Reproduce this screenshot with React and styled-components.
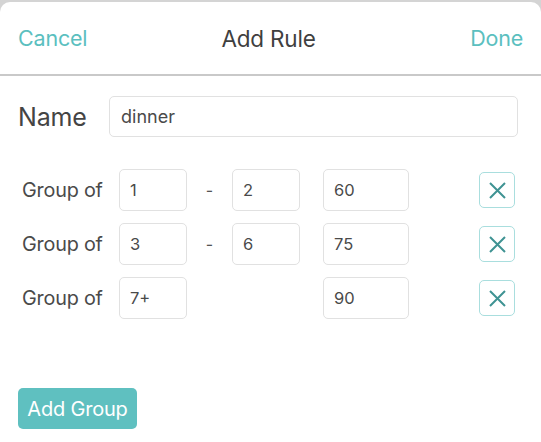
import React from "react";
import styled, { createGlobalStyle } from "styled-components";

const Global = createGlobalStyle`
  html, body { margin: 0; padding: 0; background: #cfcfcf; }
  body { font-family: Inter, "Noto Sans", sans-serif; -webkit-font-smoothing: antialiased; }
  * { box-sizing: border-box; }
`;

const Page = styled.div`
  width: 541px;
  height: 442px;
  padding-top: 2px;
  background: #d4d4d4;
  overflow: hidden;
`;

const Sheet = styled.div`
  height: 440px;
  background: #fff;
  border-radius: 10px 10px 0 0;
  display: flex;
  flex-direction: column;
`;

const Header = styled.div`
  height: 74px;
  display: grid;
  grid-template-columns: 1fr auto 1fr;
  align-items: center;
  padding: 0 18px 0 18px;
  border-bottom: 2px solid #c9c9c9;
`;

const NavButton = styled.span`
  font-size: 21.5px;
  color: #5bbfbf;
  justify-self: ${(p) => (p.$right ? "end" : "start")};
  letter-spacing: -0.2px;
`;

const Title = styled.span`
  font-size: 22.5px;
  color: #3f3f3f;
  letter-spacing: -0.2px;
  padding-right: 4px;
`;

const NameRow = styled.div`
  display: flex;
  align-items: center;
  margin-top: 20px;
  padding: 0 23px 0 18px;
`;

const NameLabel = styled.span`
  width: 91px;
  font-size: 25px;
  color: #444;
  letter-spacing: -0.2px;
`;

const TextBox = styled.div`
  height: ${(p) => p.$h || 42}px;
  width: ${(p) => (p.$w ? `${p.$w}px` : "auto")};
  flex: ${(p) => (p.$w ? "none" : 1)};
  border: 1px solid #e1e1e1;
  border-radius: 5px;
  display: flex;
  align-items: center;
  padding-left: ${(p) => p.$pad || 10}px;
  font-size: ${(p) => p.$fs || 16.5}px;
  color: #4a4a4a;
`;

const Groups = styled.div`
  display: flex;
  flex-direction: column;
  gap: 12px;
  margin-top: 32px;
`;

const Row = styled.div`
  display: flex;
  align-items: center;
  padding-left: 22px;
  height: 42px;
`;

const RowLabel = styled.span`
  width: 97px;
  font-size: 19.8px;
  color: #4a4a4a;
  letter-spacing: -0.2px;
`;

const Dash = styled.span`
  width: 45px;
  text-align: center;
  font-size: 16px;
  color: #555;
`;

const Spacer = styled.div`
  width: ${(p) => p.$w}px;
  flex: none;
`;

const RemoveButton = styled.div`
  width: 36px;
  height: 36px;
  border: 1px solid #a9dede;
  border-radius: 5px;
  display: flex;
  align-items: center;
  justify-content: center;
`;

const AddButton = styled.div`
  margin: 69px 0 0 18px;
  width: 119px;
  height: 41px;
  border-radius: 5px;
  background: #5fc0c0;
  color: #fff;
  font-size: 20px;
  letter-spacing: -0.2px;
  display: flex;
  align-items: center;
  justify-content: center;
`;

const XIcon = () => (
  <svg width="19" height="19" viewBox="0 0 19 19">
    <path d="M2 2 L17 17 M17 2 L2 17" stroke="#3f9393" strokeWidth="2" strokeLinecap="butt" />
  </svg>
);

const groups = [
  { from: "1", to: "2", value: "60" },
  { from: "3", to: "6", value: "75" },
  { from: "7+", to: null, value: "90" },
];

export default function App() {
  return (
    <>
      <Global />
      <Page>
        <Sheet>
          <Header>
            <NavButton>Cancel</NavButton>
            <Title>Add Rule</Title>
            <NavButton $right>Done</NavButton>
          </Header>
          <NameRow>
            <NameLabel>Name</NameLabel>
            <TextBox $h={41} $pad={11} $fs={18}>dinner</TextBox>
          </NameRow>
          <Groups>
            {groups.map((g, i) => (
              <Row key={i}>
                <RowLabel>Group of</RowLabel>
                <TextBox $w={68}>{g.from}</TextBox>
                {g.to !== null ? (
                  <>
                    <Dash>-</Dash>
                    <TextBox $w={68}>{g.to}</TextBox>
                  </>
                ) : (
                  <Spacer $w={113} />
                )}
                <Spacer $w={23} />
                <TextBox $w={86}>{g.value}</TextBox>
                <Spacer $w={70} />
                <RemoveButton>
                  <XIcon />
                </RemoveButton>
              </Row>
            ))}
          </Groups>
          <AddButton>Add Group</AddButton>
        </Sheet>
      </Page>
    </>
  );
}
